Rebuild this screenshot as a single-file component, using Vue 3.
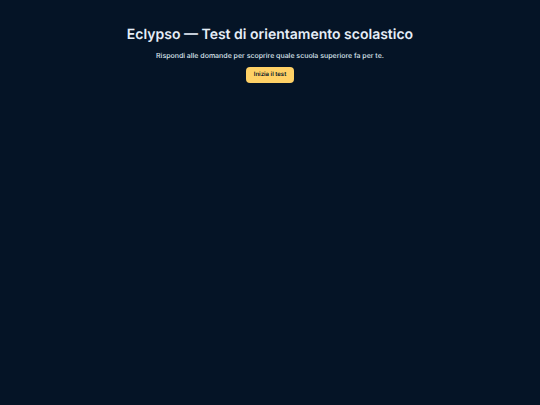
<script setup>
import { ref } from 'vue';

const started = ref(false);

const startTest = () => {
    started.value = true;
};
</script>

<template>
    <main class="container">
        <h1>Eclypso — Test di orientamento scolastico</h1>
        <p>Rispondi alle domande per scoprire quale scuola superiore fa per te.</p>
        <button type="button" :disabled="started" @click="startTest">Inizia il test</button>
    </main>
</template>

<style>
body {
    margin: 0;
    background-color: #051426;
}
</style>

<style scoped>
.container {
    display: flex;
    flex-direction: column;
    align-items: center;
    padding: 26px 16px;
    color: #e6eef8;
    font-family: Inter, sans-serif;
    text-align: center;
    text-rendering: geometricPrecision;
}

h1 {
    margin: 0;
    font-size: 14px;
    font-weight: 600;
    line-height: 17px;
}

p {
    margin: 9px 0 7px;
    color: #dbe4ee;
    font-size: 7px;
    font-weight: 500;
    line-height: 8px;
}

button {
    padding: 4px 8px;
    border: none;
    border-radius: 4px;
    background-color: #ffd166;
    color: #051426;
    font-family: inherit;
    font-size: 6px;
    font-weight: 600;
    line-height: 8px;
    text-rendering: inherit;
    cursor: pointer;
}
</style>
